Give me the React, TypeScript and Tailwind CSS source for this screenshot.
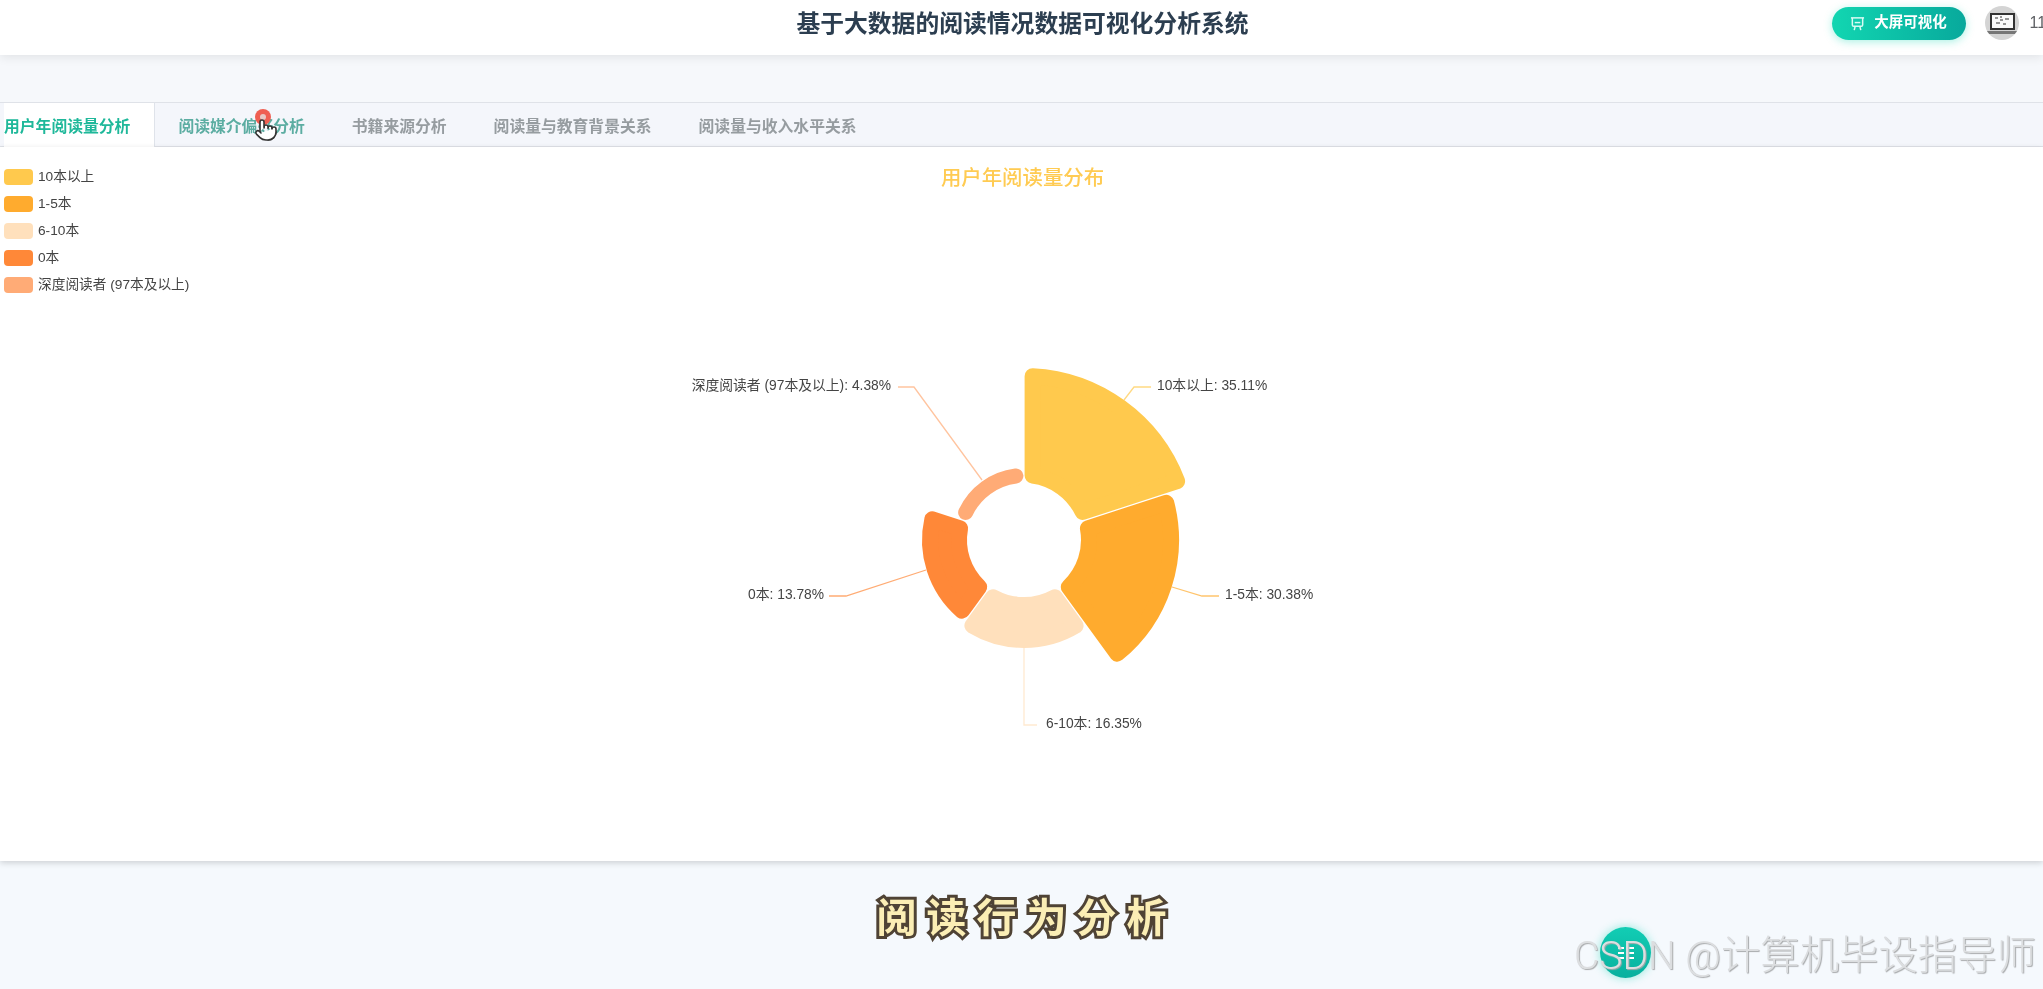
import { Pointer } from 'lucide-react';

const cx = 1024;
const cy = 540;
const inner = 57;

const slices = [
  { name: '10本以上', pct: '35.11%', color: '#ffc94d', r: 172, line: '1124,400 1134,387 1151,387', x: 1157, y: 386, anchor: 'start' },
  { name: '1-5本', pct: '30.38%', color: '#ffab2e', r: 155, line: '1172,587 1202,596 1219,596', x: 1225, y: 595, anchor: 'start' },
  { name: '6-10本', pct: '16.35%', color: '#ffe0bc', r: 108, line: '1024,647 1024,725 1037,725', x: 1046, y: 724, anchor: 'start' },
  { name: '0本', pct: '13.78%', color: '#ff8838', r: 102, line: '926,570 846,596 829,596', x: 824, y: 595, anchor: 'end' },
  { name: '深度阅读者 (97本及以上)', pct: '4.38%', color: '#ffab76', r: 72, line: '982,480 914,387 898,387', x: 891, y: 386, anchor: 'end' },
];

const legend = slices.map((s) => ({ name: s.name, color: s.color }));

const tabs = [
  { label: '用户年阅读量分析', cls: 'bg-white text-[#1fb89a] border-r border-[#dfe3ea] pr-[23.5px] ml-[4px]' },
  { label: '阅读媒介偏好分析', cls: 'text-[#5cada2] px-[23.5px]' },
  { label: '书籍来源分析', cls: 'text-[#969ca0] px-[23.5px]' },
  { label: '阅读量与教育背景关系', cls: 'text-[#969ca0] px-[23.5px]' },
  { label: '阅读量与收入水平关系', cls: 'text-[#969ca0] px-[23.5px]' },
];

function pt(r: number, a: number) {
  return `${(cx + r * Math.sin(a)).toFixed(2)} ${(cy - r * Math.cos(a)).toFixed(2)}`;
}

// rounded sector: inset the shape by the corner radius, then stroke it back out
function sectorPath(i: number, R: number) {
  const rc = Math.min(8, (R - inner) / 2);
  const ri = inner + rc;
  const ro = R - rc;
  const a0 = (i * 72 * Math.PI) / 180;
  const a1 = ((i + 1) * 72 * Math.PI) / 180;
  const gap = rc + 0.6;
  const di = Math.asin(gap / ri);
  const dout = Math.asin(gap / ro);
  return [
    `M ${pt(ri, a0 + di)}`,
    `L ${pt(ro, a0 + dout)}`,
    `A ${ro} ${ro} 0 0 1 ${pt(ro, a1 - dout)}`,
    `L ${pt(ri, a1 - di)}`,
    `A ${ri} ${ri} 0 0 0 ${pt(ri, a0 + di)}`,
    'Z',
  ].join(' ');
}

function ScreenIcon() {
  return (
    <svg width="15" height="15" viewBox="0 0 16 16" fill="none" stroke="#d9fbf3" strokeWidth="1.6">
      <path d="M1 2h14" />
      <path d="M2.5 2v7.5a1.5 1.5 0 0 0 1.500 1.500h8a1.500 1.500 0 0 0 1.500-1.500V2" />
      <path d="M5 7h6" />
      <path d="M5.500 11l-1 4M10.500 11l1 4" />
    </svg>
  );
}

function Avatar() {
  return (
    <div className="w-[34px] h-[34px] rounded-full bg-[#d4d4d4] overflow-hidden flex items-center justify-center">
      <svg width="34" height="34" viewBox="0 0 34 34">
        <rect x="5" y="7" width="25" height="17" fill="#333333" />
        <rect x="7" y="9" width="21" height="13" fill="#fafafa" />
        <path d="M10 12h3M15 11h2M20 13h4M11 17h4M18 18h3M15 14h3" stroke="#333" strokeWidth="1.100" />
        <rect x="2" y="25" width="30" height="3" fill="#777777" />
      </svg>
    </div>
  );
}

export default function App() {
  return (
    <div className="w-screen h-screen overflow-hidden flex flex-col bg-[#f6f8fb] blur-[0.4px] [font-family:'Liberation_Sans','Noto_Sans_CJK_SC',sans-serif]">
      <header className="relative z-10 h-[55px] shrink-0 bg-white shadow-[0_2px_10px_rgba(0,0,0,0.09)] grid grid-cols-[minmax(0,1fr)_auto_minmax(0,1fr)] items-center">
        <div />
        <h1 className="text-[23.8px] font-bold text-[#2c3e50] pb-[7px] pl-[2px]">基于大数据的阅读情况数据可视化分析系统</h1>
        <div className="flex items-center pl-[583px] pb-[9px]">
          <button className="w-[134px] h-[33px] shrink-0 rounded-full bg-gradient-to-r from-[#12d6b1] to-[#08a99c] shadow-[0_2px_8px_rgba(18,214,177,0.35)] flex items-center justify-center gap-[9px] text-white text-[14.5px] font-bold">
            <ScreenIcon />
            大屏可视化
          </button>
          <div className="ml-[19px] shrink-0">
            <Avatar />
          </div>
          <span className="ml-[11px] text-[16px] text-[#606266] shrink-0">111</span>
        </div>
      </header>

      <div className="h-[47px] shrink-0" />

      <nav className="relative h-[45px] shrink-0 flex bg-[#f4f6fb] border-t border-b border-[#dfe2e8]">
        {tabs.map((t) => (
          <div key={t.label} className={`flex items-center pt-[3px] text-[15.8px] font-bold -mb-px ${t.cls}`}>
            {t.label}
          </div>
        ))}
        <div className="absolute left-[255px] top-[6px] w-[16px] h-[16px] rounded-full bg-[#ef5f52] flex items-center justify-center">
          <div className="w-[6px] h-[6px] rounded-full bg-[#e8c8c4]" />
        </div>
        <Pointer className="absolute left-[254px] top-[15px]" size={24} fill="#ffffff" stroke="#333333" strokeWidth={1.6} />
      </nav>

      <main className="relative z-10 h-[714px] shrink-0 bg-white shadow-[0_2px_6px_rgba(0,0,0,0.16)] grid grid-cols-[minmax(0,1fr)_auto_minmax(0,1fr)] items-start">
        <svg className="absolute inset-0" width="2043" height="714" viewBox="0 147 2043 714">
          {slices.map((s, i) => {
            const rc = Math.min(8, (s.r - inner) / 2);
            return (
              <path key={s.name} d={sectorPath(i, s.r)} fill={s.color} stroke={s.color} strokeWidth={rc * 2} strokeLinejoin="round" strokeLinecap="round" />
            );
          })}
          {slices.map((s) => (
            <polyline key={s.name} points={s.line} fill="none" stroke={s.color} strokeOpacity="0.7" strokeWidth="1.300" />
          ))}
          {slices.map((s) => (
            <text key={s.name} x={s.x} y={s.y} fontSize="13.8" fill="#444444" textAnchor={s.anchor as 'start' | 'end'} dominantBaseline="middle">
              {s.name}: {s.pct}
            </text>
          ))}
        </svg>

        <ul className="relative flex flex-col gap-[11px] pt-[22px] pl-[4px]">
          {legend.map((l) => (
            <li key={l.name} className="flex items-center gap-[5px] h-[16px] text-[13.7px] text-[#444444]">
              <span className="w-[29px] h-[16px] rounded-[4px] shrink-0" style={{ backgroundColor: l.color }} />
              {l.name}
            </li>
          ))}
        </ul>
        <h2 className="relative pt-[17px] pl-[2px] text-[20.4px] leading-[28px] font-medium text-[#ffcb52]">用户年阅读量分布</h2>
        <div />
      </main>

      <footer className="relative flex-1 flex items-center justify-center pb-[14px] bg-[#f5f9fd]">
        <div className="text-[40px] font-bold tracking-[10px] pl-[10px] text-[#fbeeb5] [-webkit-text-stroke:6px_#4f4335] [paint-order:stroke_fill]">
          阅读行为分析
        </div>
        <div className="absolute right-[392px] top-[66px] w-[51px] h-[51px] rounded-full bg-gradient-to-b from-[#12cdb4] to-[#08b09e] shadow-[0_0_10px_rgba(18,214,177,0.45)] flex items-center justify-center">
          <svg width="20" height="18" viewBox="0 0 20 18" fill="#ffffff">
            <rect x="2" y="3" width="6" height="2" />
            <rect x="2" y="8" width="6" height="2" />
            <rect x="2" y="13" width="6" height="2" />
            <rect x="10" y="3" width="8" height="2" />
            <rect x="10" y="8" width="8" height="2" />
            <rect x="10" y="13" width="8" height="2" />
          </svg>
        </div>
        <div className="absolute right-[7px] top-[72px] leading-[44px] whitespace-nowrap text-[#dcdee0] [text-shadow:1px_1px_1px_#a8aaac] font-light">
          <span className="text-[39px] [font-family:Roboto,'Liberation_Sans',sans-serif]">CSDN @</span>
          <span className="text-[39.4px]">计算机毕设指导师</span>
        </div>
      </footer>
    </div>
  );
}
